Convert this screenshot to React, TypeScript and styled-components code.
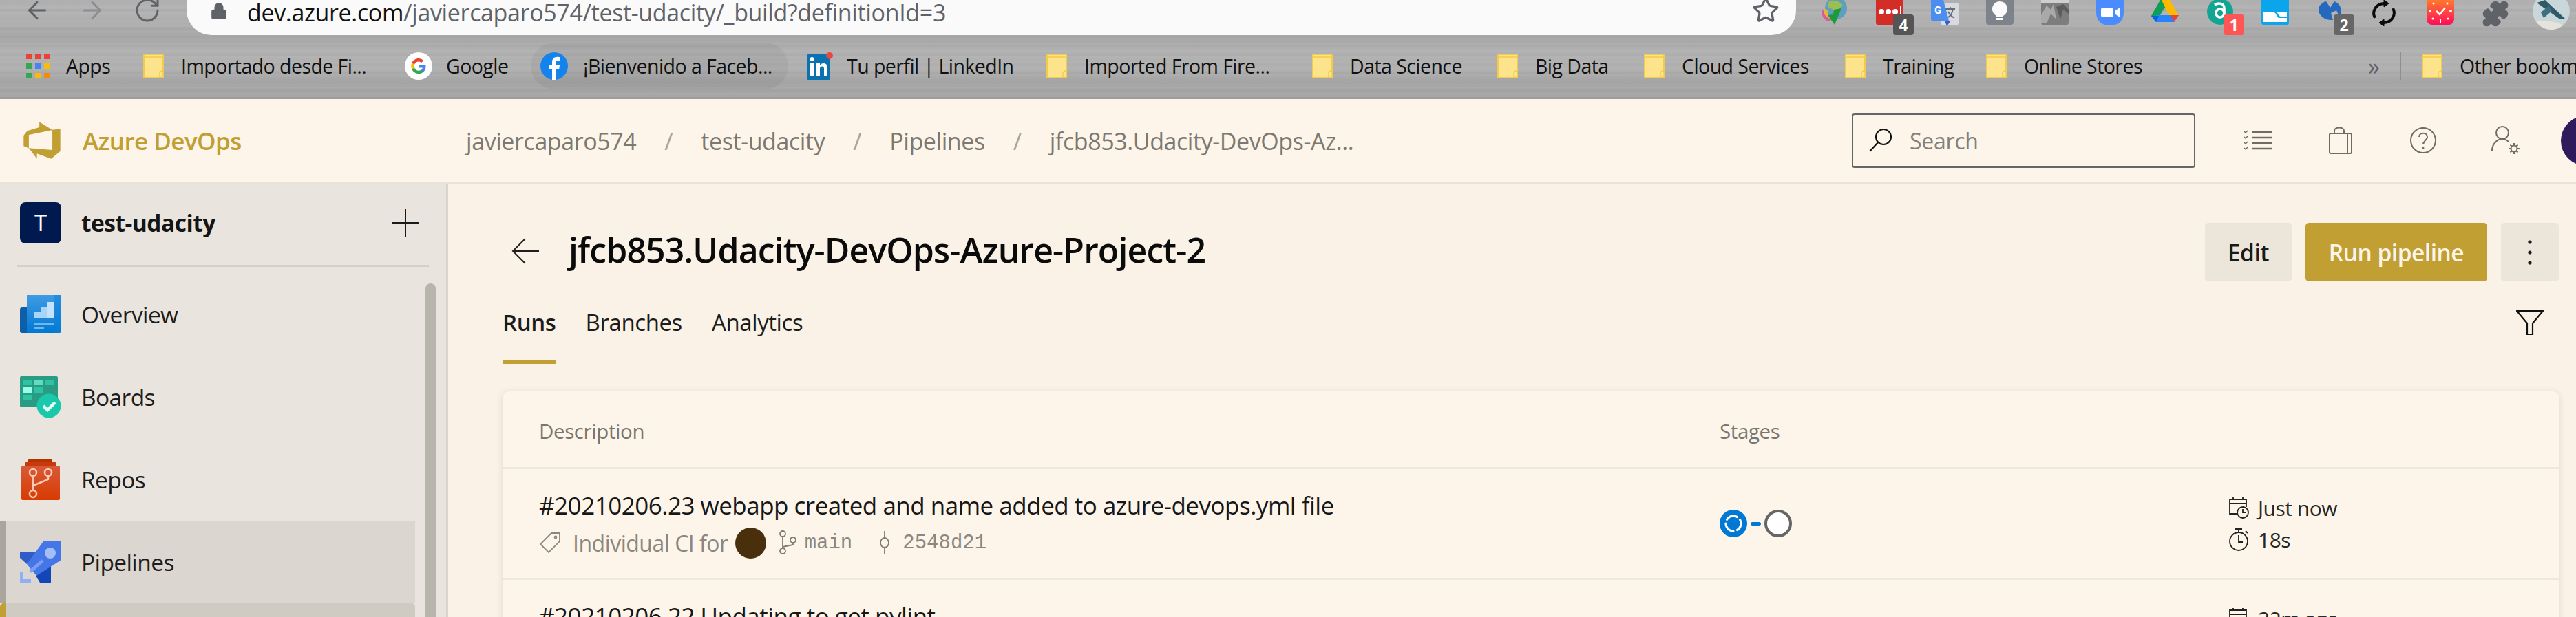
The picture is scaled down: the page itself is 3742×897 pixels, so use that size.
import React from "react";
import styled, { createGlobalStyle } from "styled-components";
import { ArrowLeft, ArrowRight, RotateCw, Lock, Star, Puzzle } from "lucide-react";

const SANS = `"Open Sans", "Noto Sans", "Liberation Sans", sans-serif`;
const MONO = `"Liberation Mono", "DejaVu Sans Mono", monospace`;
const GOLD = "#c19f33";

const GlobalStyle = createGlobalStyle`
  html, body { margin: 0; padding: 0; background: #fdf5e9; }
  body { font-family: ${SANS}; }
  * { box-sizing: border-box; }
`;

const Page = styled.div`
  width: 3742px;
  height: 897px;
  overflow: hidden;
  display: flex;
  flex-direction: column;
`;

/* browser chrome */
const Chrome = styled.div`
  height: 144px;
  flex: none;
  border-bottom: 3px solid #9c9c9c;
  background-color: #adadad;
  background-image:
    linear-gradient(180deg, rgba(255, 255, 255, 0.05) 0 22%, rgba(0, 0, 0, 0.03) 34% 41%, rgba(255, 255, 255, 0.05) 52% 70%, rgba(0, 0, 0, 0.04) 82% 100%),
    repeating-linear-gradient(180deg, rgba(255, 255, 255, 0.035) 0 2px, transparent 4px 9px),
    repeating-linear-gradient(180deg, rgba(0, 0, 0, 0.025) 0 3px, transparent 5px 13px);
`;

const TopBar = styled.div`
  height: 51px;
  display: flex;
  align-items: flex-start;
`;

const NavGroup = styled.div`
  width: 271px;
  flex: none;
  display: flex;
  gap: 40px;
  padding-left: 34px;
  color: #5f6368;
`;

const NavIcon = styled.span<{ $dim?: boolean }>`
  display: block;
  height: 40px;
  margin-top: -5px;
  color: ${(p) => (p.$dim ? "#8a8d91" : "#5f6368")};
`;

const AddressBar = styled.div`
  width: 2338px;
  height: 51px;
  flex: none;
  display: flex;
  align-items: flex-start;
  background: #fafafa;
  border-radius: 0 0 36px 36px;
  padding: 0 24px 0 34px;
`;

const LockIcon = styled.span`
  display: block;
  height: 30px;
  margin-top: 3px;
  color: #5f6368;
`;

const Url = styled.div`
  margin-left: 28px;
  font-size: 34px;
  line-height: 36px;
  letter-spacing: -0.35px;
  color: #5f6368;
  white-space: nowrap;
`;

const UrlHost = styled.span`
  color: #111;
`;

const StarIcon = styled.span`
  display: block;
  margin-left: auto;
  margin-top: -5px;
  color: #5f6368;
`;

const Extensions = styled.div`
  display: flex;
  gap: 40px;
  margin-left: 36px;
`;

const ExtSlot = styled.div`
  position: relative;
  width: 40px;
  height: 36px;
  flex: none;
`;

const ExtBadge = styled.span<{ $bg: string }>`
  position: absolute;
  left: 25px;
  top: 21px;
  width: 30px;
  height: 30px;
  border-radius: 4px;
  background: ${(p) => p.$bg};
  color: #fff;
  font-size: 23px;
  font-weight: 700;
  line-height: 30px;
  text-align: center;
`;

const BookmarkBar = styled.div`
  height: 90px;
  display: flex;
  align-items: center;
  padding-left: 38px;
  overflow: hidden;
`;

const Bookmark = styled.div<{ $w?: number; $gap: number; $pill?: boolean }>`
  width: ${(p) => (p.$w ? `${p.$w}px` : "auto")};
  height: 68px;
  flex: none;
  display: flex;
  align-items: center;
  gap: ${(p) => p.$gap}px;
  font-size: 28.5px;
  letter-spacing: -0.55px;
  color: #111;
  white-space: nowrap;
  ${(p) =>
    p.$pill &&
    `
    background: rgba(0, 0, 0, 0.045);
    border-radius: 34px;
    padding-left: 14px;
    margin-right: 27px;
  `}
`;

const BookmarkOverflow = styled.div`
  margin-left: auto;
  width: 302px;
  flex: none;
  display: flex;
  align-items: center;
  overflow: hidden;
`;

const Chevrons = styled.span`
  width: 46px;
  flex: none;
  color: #5f6368;
  font-size: 34px;
  line-height: 40px;
`;

const BarDivider = styled.span`
  width: 2px;
  height: 40px;
  flex: none;
  margin-right: 30px;
  background: #8f8f8f;
`;

/* azure header */
const Header = styled.header`
  height: 123px;
  flex: none;
  display: flex;
  align-items: center;
  background: #fdf5e9;
  border-bottom: 3px solid #e9e3d9;
`;

const Brand = styled.div`
  width: 677px;
  flex: none;
  display: flex;
  align-items: center;
  gap: 29px;
  padding-left: 31px;
  color: ${GOLD};
  font-size: 35px;
  font-weight: 600;
  letter-spacing: -0.55px;
`;

const Crumbs = styled.nav`
  display: flex;
  align-items: center;
  gap: 40px;
  margin-top: 2px;
  font-size: 34px;
  letter-spacing: -0.42px;
  color: #7d7971;
`;

const CrumbSlash = styled.span`
  width: 14px;
  text-align: center;
  color: #a7a39b;
`;

const HeaderRight = styled.div`
  margin-left: auto;
  display: flex;
  align-items: center;
`;

const SearchBox = styled.div`
  width: 499px;
  height: 79px;
  display: flex;
  align-items: center;
  gap: 24px;
  padding-left: 22px;
  margin-right: 31px;
  border: 2px solid #666;
  border-radius: 4px;
  color: #85817a;
  font-size: 32px;
  letter-spacing: -0.3px;
`;

const HeaderIcon = styled.button`
  width: 120px;
  height: 60px;
  padding: 0;
  border: 0;
  background: none;
  display: flex;
  align-items: center;
  justify-content: center;
  color: #6f6b65;
`;

const Avatar = styled.div`
  width: 73px;
  height: 73px;
  flex: none;
  margin-left: 20px;
  margin-right: -51px;
  border-radius: 50%;
  background: #2f1a5c;
`;

const Body = styled.div`
  flex: 1;
  min-height: 0;
  display: flex;
`;

/* sidebar */
const Sidebar = styled.aside`
  position: relative;
  width: 651px;
  flex: none;
  overflow: hidden;
  background: #e9e5de;
  border-right: 3px solid #d9d5cd;
`;

const ProjectRow = styled.div`
  height: 118px;
  display: flex;
  align-items: center;
  padding: 0 39px 4px 29px;
`;

const ProjectTile = styled.div`
  width: 60px;
  height: 60px;
  flex: none;
  border-radius: 8px;
  background: #001a4f;
  color: #fff;
  font-size: 33px;
  line-height: 60px;
  text-align: center;
`;

const ProjectName = styled.div`
  margin-left: 29px;
  font-size: 33.5px;
  font-weight: 700;
  letter-spacing: -0.5px;
  color: #151515;
`;

const PlusIcon = styled.span`
  display: block;
  margin-left: auto;
  height: 40px;
`;

const SideDivider = styled.div`
  height: 3px;
  margin: 0 25px;
  background: #d4d0c8;
`;

const NavList = styled.div`
  width: 603px;
  padding-top: 9px;
`;

const NavRow = styled.div<{ $active?: boolean }>`
  height: 120px;
  display: flex;
  align-items: center;
  gap: 29px;
  padding-left: 21px;
  border-left: 8px solid ${(p) => (p.$active ? "#aaa69e" : "transparent")};
  background: ${(p) => (p.$active ? "#dbd6cf" : "transparent")};
  color: #1d1d1d;
  font-size: 33.5px;
  letter-spacing: -0.6px;
  font-weight: ${(p) => (p.$active ? 500 : 400)};
`;

const SubRow = styled.div`
  height: 120px;
  border-left: 8px solid ${GOLD};
  border-radius: 5px 5px 0 0;
  background: #cfcbc3;
`;

const SideScroll = styled.div`
  position: absolute;
  left: 618px;
  top: 145px;
  bottom: -40px;
  width: 15px;
  border-radius: 8px;
  background: #b8b5ad;
`;

/* main content */
const Main = styled.main`
  flex: 1;
  min-width: 0;
  background: #faf2e6;
  padding: 57px 24px 0 79px;
`;

const TitleRow = styled.div`
  height: 85px;
  display: flex;
  align-items: center;
  padding-left: 13px;
`;

const BackArrow = styled.span`
  display: block;
  width: 83px;
  height: 38px;
  margin-top: -3px;
  flex: none;
`;

const PageTitle = styled.h1`
  margin: -8px 0 0;
  font-size: 50px;
  font-weight: 600;
  letter-spacing: -0.9px;
  color: #0b0b0b;
`;

const Actions = styled.div`
  margin-left: auto;
  display: flex;
  gap: 20px;
  margin-right: 1px;
`;

const ActionButton = styled.button<{ $primary?: boolean; $w: number }>`
  width: ${(p) => p.$w}px;
  height: 85px;
  padding: 0;
  border: 0;
  border-radius: 5px;
  display: flex;
  align-items: center;
  justify-content: center;
  font-family: ${SANS};
  font-size: 33.5px;
  font-weight: 600;
  letter-spacing: -0.5px;
  background: ${(p) => (p.$primary ? GOLD : "#ece5da")};
  color: ${(p) => (p.$primary ? "#fdf5e9" : "#1a1a1a")};
`;

const TabsRow = styled.div`
  height: 120px;
  display: flex;
  align-items: flex-end;
`;

const Tab = styled.div<{ $active?: boolean }>`
  height: 104px;
  padding-top: 23px;
  margin-right: 43px;
  font-size: 33px;
  line-height: 42px;
  letter-spacing: -0.4px;
  color: #1c1c1c;
  font-weight: ${(p) => (p.$active ? 600 : 400)};
  border-bottom: 5px solid ${(p) => (p.$active ? GOLD : "transparent")};
`;

const FilterIcon = styled.span`
  display: block;
  margin-left: auto;
  margin-right: 23px;
  align-self: flex-start;
  margin-top: 42px;
  height: 36px;
`;

const Card = styled.section`
  margin-top: 40px;
  width: 2988px;
  height: 400px;
  background: #fdf5e9;
  border-radius: 10px 10px 0 0;
  box-shadow: 0 1px 10px rgba(90, 70, 40, 0.14);
`;

const TableRow = styled.div<{ $header?: boolean }>`
  display: grid;
  grid-template-columns: 1715px 739px 1fr;
  height: ${(p) => (p.$header ? "113px" : "161px")};
  padding-left: 53px;
  border-bottom: 3px solid #ece7df;
  align-items: ${(p) => (p.$header ? "start" : "stretch")};
`;

const HeadCell = styled.div`
  padding-top: 39px;
  font-size: 29.5px;
  line-height: 38px;
  letter-spacing: -0.4px;
  color: #7a766f;
`;

const DescCell = styled.div`
  padding-top: 31px;
`;

const RunTitle = styled.div`
  font-size: 35px;
  line-height: 44px;
  font-weight: 500;
  letter-spacing: -0.5px;
  color: #171717;
  white-space: nowrap;
`;

const RunMeta = styled.div`
  display: flex;
  align-items: center;
  height: 46px;
  margin-top: 9px;
  color: #8b8780;
  font-size: 32px;
  letter-spacing: -0.5px;
`;

const MetaIcon = styled.span<{ $l?: number; $r?: number }>`
  display: block;
  height: 36px;
  flex: none;
  margin-left: ${(p) => p.$l || 0}px;
  margin-right: ${(p) => p.$r || 0}px;
`;

const AuthorDot = styled.span`
  width: 45px;
  height: 45px;
  flex: none;
  margin: 0 18px 0 10px;
  border-radius: 50%;
  background: #4a2f0c;
`;

const MonoText = styled.span`
  font-family: ${MONO};
  font-size: 29px;
  letter-spacing: 0;
  color: #8b8780;
`;

const StageCell = styled.div`
  padding-top: 59px;
  display: flex;
  align-items: flex-start;
`;

const StageConnector = styled.span`
  width: 15px;
  height: 5px;
  margin: 18px 5px 0;
  border-radius: 3px;
  background: #0078d4;
`;

const TimeCell = styled.div`
  padding-top: 38px;
  display: flex;
  flex-direction: column;
  gap: 10px;
`;

const TimeLine = styled.div`
  height: 36px;
  display: flex;
  align-items: center;
  gap: 13px;
  font-size: 30px;
  letter-spacing: -0.5px;
  color: #262626;
`;

/* drawings */
const FolderIcon = () => (
  <svg width="30" height="36" viewBox="0 0 30 36">
    <rect x="1" y="1" width="28" height="34" fill="#fde48c" stroke="#f2cb4a" strokeWidth="2" />
    <path d="M1 5h28" stroke="#f2cb4a" strokeWidth="1.5" />
    <path d="M24 34v-7l3-2 2 2v8z" fill="#fde48c" stroke="#f2cb4a" strokeWidth="1.5" />
  </svg>
);

const AppsIcon = () => (
  <svg width="34" height="36" viewBox="0 0 34 36">
    {["#ea4335", "#ea4335", "#ea4335", "#34a853", "#4285f4", "#fbbc05", "#34a853", "#fbbc05", "#f58a07"].map(
      (c, i) => (
        <rect key={i} x={(i % 3) * 13} y={Math.floor(i / 3) * 14} width="8" height="8" fill={c} />
      )
    )}
  </svg>
);

const GoogleIcon = () => (
  <svg width="40" height="40" viewBox="0 0 40 40">
    <circle cx="20" cy="20" r="20" fill="#fff" />
    <path d="M30.5 20.5c0-.8-.1-1.500-.2-2.200H20v4.200h5.900c-.3 1.400-1 2.500-2.200 3.300v2.700h3.500c2-1.900 3.300-4.700 3.300-8z" fill="#4285f4" />
    <path d="M20 31c2.900 0 5.400-1 7.200-2.600l-3.500-2.700c-1 .7-2.200 1-3.700 1-2.800 0-5.200-1.900-6-4.500H10.400v2.800C12.200 28.600 15.800 31 20 31z" fill="#34a853" />
    <path d="M14 22.200c-.5-1.400-.5-3 0-4.400V15H10.400c-1.500 3-1.500 7 0 10z" fill="#fbbc05" />
    <path d="M20 13.400c1.600 0 3 .5 4.100 1.600l3.100-3.100C25.300 10.100 22.900 9 20 9c-4.200 0-7.800 2.400-9.600 6l3.600 2.800c.8-2.500 3.200-4.400 6-4.400z" fill="#ea4335" />
  </svg>
);

const FacebookIcon = () => (
  <svg width="40" height="40" viewBox="0 0 40 40">
    <circle cx="20" cy="20" r="20" fill="#1583ee" />
    <path d="M17 40V25h-5v-6h5v-4.500c0-5 3-7.700 7.500-7.700 2.100 0 3.700.3 3.700.3v5h-2.500c-2.500 0-3.200 1.500-3.200 3.100V19h5.500l-.9 6h-4.600v15z" fill="#fff" />
  </svg>
);

const LinkedInIcon = () => (
  <svg width="38" height="40" viewBox="0 0 38 40">
    <rect x="0" y="3" width="34" height="37" rx="2" fill="#0a72b1" />
    <rect x="5" y="16" width="5" height="19" fill="#fff" />
    <circle cx="7.500" cy="10" r="3" fill="#fff" />
    <path d="M14 16h5v3c1-2 3-3 5-3 4 0 6 2.500 6 7v12h-5V24c0-2.500-1-3.500-3-3.500s-3 1.500-3 3.500v11h-5z" fill="#fff" />
    <circle cx="33" cy="5" r="5" fill="#e8483f" />
  </svg>
);

const IdmIcon = () => (
  <svg width="40" height="36" viewBox="0 0 40 36">
    <circle cx="22" cy="12" r="16" fill="#5c9fc0" />
    <path d="M12 2c8-3 16 0 20 6l-10 8-12-6z" fill="#9bbf52" />
    <path d="M3 14c-4 8 2 16 10 17l3-5c-5 0-8-4-7-9z" fill="#d65aa0" />
    <path d="M5 12c-2 6 1 13 8 15l2-3c-4-1-6-5-5-9z" fill="#e8b23c" />
    <path d="M30 12 20 36 10 22l8-1 1-7z" fill="#1e9a3a" />
  </svg>
);

const LastPassIcon = () => (
  <svg width="40" height="36" viewBox="0 0 40 36">
    <path d="M0 0h40v33a3 3 0 0 1-3 3H3a3 3 0 0 1-3-3z" fill="#d32d27" />
    <circle cx="8" cy="17" r="4" fill="#fff" />
    <circle cx="18" cy="17" r="4" fill="#fff" />
    <circle cx="28" cy="17" r="4" fill="#fff" />
    <rect x="35" y="9" width="2" height="15" fill="#fff" />
  </svg>
);

const TranslateIcon = () => (
  <svg width="40" height="40" viewBox="0 0 40 40" style={{ overflow: "visible" }}>
    <rect x="14" y="4" width="26" height="32" rx="2" fill="#d8dadd" />
    <path d="M21 13h14M28 10v3M23 26c5-2 8-7 9-13M25 17c2 4 5 7 9 9" stroke="#5f6f80" strokeWidth="1.800" fill="none" />
    <path d="M0 0h18l8 30H2a2 2 0 0 1-2-2z" fill="#4c8df0" />
    <path d="M20 30h9l-6 8z" fill="#3a5fc4" />
    <text x="5" y="20" fill="#fff" fontSize="15" fontWeight="700" fontFamily="Roboto, sans-serif">G</text>
  </svg>
);

const BulbIcon = () => (
  <svg width="40" height="36" viewBox="0 0 40 36">
    <path d="M0 0h40v32a4 4 0 0 1-4 4H4a4 4 0 0 1-4-4z" fill="#7d838a" />
    <circle cx="20" cy="13" r="11" fill="#fbfbfb" />
    <rect x="15" y="22" width="10" height="3" fill="#fbfbfb" />
    <rect x="15" y="26" width="10" height="3" fill="#fbfbfb" />
  </svg>
);

const PhotoIcon = () => (
  <svg width="40" height="36" viewBox="0 0 40 36">
    <rect width="40" height="36" rx="3" fill="#7d7d7d" />
    <rect width="40" height="4" fill="#cfcfcf" />
    <path d="M0 22 8 8l6 6 4-8 4 22-8-8-6 14H0z" fill="#a9a9a9" />
    <path d="M22 10 32 6l8 8v6l-8-6-4 14z" fill="#5c5c5c" />
  </svg>
);

const ZoomIcon = () => (
  <svg width="40" height="36" viewBox="0 0 40 36">
    <path d="M0 0h40v18c0 11-7 18-15 18H15C7 36 0 29 0 18z" fill="#4a8cff" />
    <rect x="7" y="11" width="18" height="14" rx="3" fill="#fff" />
    <path d="m27 16 7-5v14l-7-5z" fill="#fff" />
  </svg>
);

const DriveIcon = () => (
  <svg width="40" height="36" viewBox="0 0 40 36">
    <path d="M13 0h14l-6 12-8 0z" fill="#0f9d58" />
    <path d="M13 0 0 23l7 9 13-22z" fill="#0f9d58" />
    <path d="M27 0 40 23H26L15 0z" fill="#ffba00" />
    <path d="M7 22h33l-7 10H7z" fill="#2684fc" />
    <path d="M0 23h11l-4 9z" fill="#0066da" />
    <path d="M28 22h12l-7 10z" fill="#ea4335" />
  </svg>
);

const AmazonAIcon = () => (
  <svg width="40" height="36" viewBox="0 0 40 36">
    <circle cx="20" cy="17" r="19" fill="#13a594" />
    <circle cx="20" cy="19" r="6" fill="none" stroke="#fff" strokeWidth="3.500" />
    <path d="M12 7c6-4 14-2 14 5v13" fill="none" stroke="#fff" strokeWidth="3.500" />
  </svg>
);

const BlueFolderIcon = () => (
  <svg width="40" height="36" viewBox="0 0 40 36">
    <path d="M0 0h40v33a3 3 0 0 1-3 3H3a3 3 0 0 1-3-3z" fill="#0ba5ec" />
    <path d="M3 18h15c4 0 4 8 8 8h11v6H3z" fill="#fff" />
    <path d="M22 18h15v6H28c-3 0-4-6-6-6z" fill="#fff" />
  </svg>
);

const MalwareIcon = () => (
  <svg width="40" height="36" viewBox="0 0 40 36">
    <path d="M3 14C3 8 9 3 14 2l6 9 6-9c6 2 10 8 10 14 0 3-1 6-3 8l-4-9-8 4 3 10C14 30 3 24 3 14z" fill="#2469bd" />
  </svg>
);

const SyncIcon = () => (
  <svg width="36" height="38" viewBox="0 0 36 38" fill="none" stroke="#0a0a0a" strokeWidth="4">
    <path d="M5 26C0 17 6 5 19 5" />
    <path d="M31 12c5 9-1 21-14 21" />
    <path d="m18 0 7 5-7 5z" fill="#0a0a0a" strokeWidth="1" />
    <path d="m18 38-7-5 7-5z" fill="#0a0a0a" strokeWidth="1" />
  </svg>
);

const ClockAppIcon = () => (
  <svg width="40" height="36" viewBox="0 0 40 36">
    <defs>
      <linearGradient id="clockApp" x1="0" y1="0" x2="0" y2="1">
        <stop offset="0" stopColor="#ff7a2b" />
        <stop offset="1" stopColor="#ff0e5a" />
      </linearGradient>
    </defs>
    <path d="M0 0h40v28a8 8 0 0 1-8 8H8a8 8 0 0 1-8-8z" fill="url(#clockApp)" />
    <path d="m14 16 5 5 8-10" fill="none" stroke="#fff" strokeWidth="2.500" />
    <circle cx="5" cy="16" r="2" fill="#fff" />
    <circle cx="35" cy="16" r="2" fill="#fff" />
    <rect x="19" y="28" width="2" height="5" fill="#fff" />
    <circle cx="9" cy="27" r="1.500" fill="#fff" />
    <circle cx="31" cy="27" r="1.500" fill="#fff" />
    <circle cx="10" cy="5" r="1.500" fill="#fff" />
    <circle cx="30" cy="5" r="1.500" fill="#fff" />
  </svg>
);

const PilotIcon = () => (
  <svg width="42" height="43" viewBox="0 0 42 43" style={{ overflow: "visible" }}>
    <clipPath id="pilotClip">
      <circle cx="21" cy="16" r="27" />
    </clipPath>
    <g clipPath="url(#pilotClip)">
      <rect x="-8" y="-12" width="58" height="58" fill="#c9d6da" />
      <path d="M0 4 34 28l8 0L12 0z" fill="#2d5a66" />
      <path d="M6 18 18 8l4 8-12 10z" fill="#3b7080" />
      <path d="M-8 34c12-6 34-4 50 4v10H-8z" fill="#e6e3dc" />
    </g>
  </svg>
);

const SearchGlass = () => (
  <svg width="36" height="36" viewBox="0 0 36 36" fill="none" stroke="#111" strokeWidth="2.200">
    <circle cx="22" cy="13" r="11" />
    <path d="M14 21 2 34" />
  </svg>
);

const WorkItemsIcon = () => (
  <svg width="42" height="30" viewBox="0 0 42 30" fill="none" stroke="currentColor" strokeWidth="2.500">
    <path d="M13 3h28M13 11h28M13 19h28M13 27h28" />
    <path d="m1 2 2 2 3-3M1 10l2 2 3-3M1 18l2 2 3-3M1 26l2 2 3-3" strokeWidth="1.500" />
  </svg>
);

const BagIcon = () => (
  <svg width="34" height="40" viewBox="0 0 34 40" fill="none" stroke="currentColor" strokeWidth="2">
    <rect x="1" y="10" width="32" height="29" rx="2" />
    <path d="M27 10v29" />
    <path d="M8 10V6c0-6 14-6 14 0v4" />
  </svg>
);

const HelpIcon = () => (
  <svg width="38" height="38" viewBox="0 0 38 38" fill="none" stroke="currentColor" strokeWidth="2">
    <circle cx="19" cy="19" r="18" />
    <path d="M13 14c0-7 12-7 12 0 0 5-6 5-6 11" />
    <circle cx="19" cy="30" r="1.500" fill="currentColor" stroke="none" />
  </svg>
);

const UserGearIcon = () => (
  <svg width="42" height="42" viewBox="0 0 42 42" fill="none" stroke="currentColor" strokeWidth="2">
    <circle cx="16" cy="10" r="9" />
    <path d="M1 36c0-8 6-17 15-17 4 0 7 2 9 4" />
    <circle cx="33" cy="33" r="4.500" />
    <path d="M33 25v3M33 38v3M25 33h3M38 33h3M27.500 27.500l2 2M36.500 36.500l2 2M27.500 38.500l2-2M36.500 29.500l2-2" />
  </svg>
);

const OverviewIcon = () => (
  <svg width="60" height="60" viewBox="0 0 60 60">
    <defs>
      <linearGradient id="ovMain" x1="0" y1="0" x2="0" y2="1">
        <stop offset="0" stopColor="#3f9be4" />
        <stop offset="1" stopColor="#0078d4" />
      </linearGradient>
    </defs>
    <g transform="translate(0 2)">
      <path d="M3 18h12v37H3a3 3 0 0 1-3-3V21a3 3 0 0 1 3-3z" fill="#0f5ea8" />
      <path d="M10 0h50v52a3 3 0 0 1-3 3H10z" fill="url(#ovMain)" />
      <path d="M50 55h7a3 3 0 0 0 3-3V0h-10z" fill="#0c7fd8" opacity="0.5" />
      <rect x="20" y="25" width="30" height="9" fill="#a8d4f8" />
      <rect x="30" y="17" width="10" height="8" fill="#a8d4f8" />
      <rect x="40" y="10" width="10" height="24" fill="#c4e2fb" />
      <rect x="20" y="40" width="30" height="3" fill="#71b7ef" />
      <rect x="20" y="47" width="15" height="3" fill="#71b7ef" />
    </g>
  </svg>
);

const BoardsIcon = () => (
  <svg width="60" height="60" viewBox="0 0 60 60">
    <rect x="0" y="0" width="55" height="45" rx="2" fill="#2b9c84" />
    <rect x="5" y="5" width="13" height="8" fill="#2fc2a3" />
    <rect x="21" y="5" width="13" height="8" fill="#5fdcc2" />
    <rect x="37" y="5" width="13" height="8" fill="#2fc2a3" />
    <rect x="5" y="16" width="13" height="8" fill="#98fde7" />
    <rect x="21" y="16" width="13" height="8" fill="#2fc2a3" />
    <rect x="5" y="27" width="13" height="8" fill="#2fc2a3" />
    <circle cx="42" cy="43" r="17.500" fill="#1ac9ac" />
    <path d="m34 43 6 6 11-11" fill="none" stroke="#e8fff9" strokeWidth="4.500" />
  </svg>
);

const ReposIcon = () => (
  <svg width="60" height="60" viewBox="-2 0 60 60">
    <defs>
      <linearGradient id="repoMain" x1="0" y1="0" x2="0" y2="1">
        <stop offset="0" stopColor="#d85a3a" />
        <stop offset="1" stopColor="#d83b01" />
      </linearGradient>
    </defs>
    <rect x="10" y="0" width="35" height="7" rx="2" fill="#b83200" />
    <rect x="5" y="5" width="46" height="7" rx="2" fill="#c63a0c" />
    <rect x="0" y="10" width="56" height="50" rx="2" fill="url(#repoMain)" />
    <g fill="none" stroke="#ffc9b5" strokeWidth="2.500">
      <circle cx="17" cy="20" r="5" />
      <circle cx="39" cy="20" r="5" />
      <circle cx="17" cy="51" r="5" />
      <path d="M17 25v21M39 25v5L17 39" />
    </g>
  </svg>
);

const PipelinesIcon = () => (
  <svg width="60" height="60" viewBox="0 0 60 60">
    <path d="M0 16h24L10 33 0 24z" fill="#2f5cc6" />
    <path d="M45 25v35H29l-6-10z" fill="#1347b8" />
    <path d="M34 0h26v27L24 50 10 33z" fill="#4476e8" />
    <circle cx="44" cy="17" r="8" fill="#a5bdf5" />
    <path d="M33 28 15 44" stroke="#7d9df0" strokeWidth="5" />
    <path d="M0 45h5v10h11v5H0z" fill="#8fb0f5" />
  </svg>
);

const TagIcon = () => (
  <svg width="32" height="32" viewBox="0 0 32 32" fill="none" stroke="#8b8780" strokeWidth="1.800">
    <path d="M30 2H18L2 18l12 12 16-16z" />
    <circle cx="24" cy="8" r="1.500" />
  </svg>
);

const BranchIcon = () => (
  <svg width="26" height="36" viewBox="0 0 26 36" fill="none" stroke="#7f7b74" strokeWidth="1.800">
    <circle cx="6" cy="5" r="4" />
    <circle cx="21" cy="14" r="4" />
    <circle cx="6" cy="30" r="4" />
    <path d="M6 9v17M21 18v3l-15 3" />
  </svg>
);

const CommitIcon = () => (
  <svg width="16" height="36" viewBox="0 0 16 36" fill="none" stroke="#7f7b74" strokeWidth="1.800">
    <ellipse cx="8" cy="18" rx="6" ry="7" />
    <path d="M8 1v10M8 25v10" />
  </svg>
);

const StageRunning = () => (
  <svg width="40" height="40" viewBox="0 0 40 40">
    <circle cx="20" cy="20" r="20" fill="#0078d4" />
    <circle cx="20" cy="20" r="11" fill="none" stroke="#fff" strokeWidth="3.200" strokeDasharray="17 6" strokeLinecap="round" transform="rotate(-30 20 20)" />
  </svg>
);

const StagePending = () => (
  <svg width="40" height="40" viewBox="0 0 40 40">
    <circle cx="20" cy="20" r="18" fill="#fff" stroke="#666" strokeWidth="4" />
  </svg>
);

const CalendarIcon = () => (
  <svg width="30" height="34" viewBox="0 0 30 34" fill="none" stroke="#222" strokeWidth="1.800">
    <path d="M14 26H2V5h24v11M2 11h24M7 2v4M21 2v4" />
    <circle cx="21" cy="24" r="8" fill="#fdf5e9" />
    <path d="M21 19v5h4" />
  </svg>
);

const TimerIcon = () => (
  <svg width="30" height="34" viewBox="0 0 30 34" fill="none" stroke="#222" strokeWidth="1.800">
    <circle cx="15" cy="20" r="13" />
    <path d="M15 11v10h6M10 2h10M15 2v5M25 5l3 3" />
  </svg>
);

const folders = [
  { label: "Imported From Fire...", w: 386 },
  { label: "Data Science", w: 269 },
  { label: "Big Data", w: 213 },
  { label: "Cloud Services", w: 292 },
  { label: "Training", w: 205 },
  { label: "Online Stores", w: 400 },
];

export default function App() {
  return (
    <Page>
      <GlobalStyle />
      <Chrome>
        <TopBar>
          <NavGroup>
            <NavIcon><ArrowLeft size={40} strokeWidth={1.8} /></NavIcon>
            <NavIcon $dim><ArrowRight size={40} strokeWidth={1.8} /></NavIcon>
            <NavIcon><RotateCw size={40} strokeWidth={1.8} /></NavIcon>
          </NavGroup>
          <AddressBar>
            <LockIcon><Lock size={26} fill="currentColor" /></LockIcon>
            <Url>
              <UrlHost>dev.azure.com</UrlHost>/javiercaparo574/test-udacity/_build?definitionId=3
            </Url>
            <StarIcon><Star size={40} strokeWidth={2} /></StarIcon>
          </AddressBar>
          <Extensions>
            <ExtSlot><IdmIcon /></ExtSlot>
            <ExtSlot><LastPassIcon /><ExtBadge $bg="#555">4</ExtBadge></ExtSlot>
            <ExtSlot><TranslateIcon /></ExtSlot>
            <ExtSlot><BulbIcon /></ExtSlot>
            <ExtSlot><PhotoIcon /></ExtSlot>
            <ExtSlot><ZoomIcon /></ExtSlot>
            <ExtSlot><DriveIcon /></ExtSlot>
            <ExtSlot><AmazonAIcon /><ExtBadge $bg="#ff5555">1</ExtBadge></ExtSlot>
            <ExtSlot><BlueFolderIcon /></ExtSlot>
            <ExtSlot><MalwareIcon /><ExtBadge $bg="#666">2</ExtBadge></ExtSlot>
            <ExtSlot><SyncIcon /></ExtSlot>
            <ExtSlot><ClockAppIcon /></ExtSlot>
            <ExtSlot><Puzzle size={40} color="#5f6368" fill="#5f6368" /></ExtSlot>
            <ExtSlot><PilotIcon /></ExtSlot>
          </Extensions>
        </TopBar>
        <BookmarkBar>
          <Bookmark $w={170} $gap={24}><AppsIcon />Apps</Bookmark>
          <Bookmark $w={380} $gap={25}><FolderIcon />Importado desde Fi...</Bookmark>
          <Bookmark $w={183} $gap={20}><GoogleIcon />Google</Bookmark>
          <Bookmark $w={374} $gap={22} $pill><FacebookIcon />¡Bienvenido a Faceb...</Bookmark>
          <Bookmark $w={348} $gap={20}><LinkedInIcon />Tu perfil | LinkedIn</Bookmark>
          {folders.map((b) => (
            <Bookmark key={b.label} $w={b.w} $gap={25}><FolderIcon />{b.label}</Bookmark>
          ))}
          <BookmarkOverflow>
            <Chevrons>»</Chevrons>
            <BarDivider />
            <Bookmark $gap={25}><FolderIcon />Other bookmarks</Bookmark>
          </BookmarkOverflow>
        </BookmarkBar>
      </Chrome>

      <Header>
        <Brand>
          <svg width="60" height="60" viewBox="0 0 18 18">
            <path
              fill={GOLD}
              d="M17 4v9.740l-4 3.280-6.200-2.260V17L3.290 12.410l10.230.8V4.440zm-3.410.49L7.850 1v2.290L2.580 4.840 1 6.870v4.610l2.260 1V6.570z"
            />
          </svg>
          Azure DevOps
        </Brand>
        <Crumbs>
          <span>javiercaparo574</span>
          <CrumbSlash>/</CrumbSlash>
          <span>test-udacity</span>
          <CrumbSlash>/</CrumbSlash>
          <span>Pipelines</span>
          <CrumbSlash>/</CrumbSlash>
          <span>jfcb853.Udacity-DevOps-Az...</span>
        </Crumbs>
        <HeaderRight>
          <SearchBox><SearchGlass />Search</SearchBox>
          <HeaderIcon><WorkItemsIcon /></HeaderIcon>
          <HeaderIcon><BagIcon /></HeaderIcon>
          <HeaderIcon><HelpIcon /></HeaderIcon>
          <HeaderIcon><UserGearIcon /></HeaderIcon>
          <Avatar />
        </HeaderRight>
      </Header>

      <Body>
        <Sidebar>
          <ProjectRow>
            <ProjectTile>T</ProjectTile>
            <ProjectName>test-udacity</ProjectName>
            <PlusIcon>
              <svg width="40" height="40" viewBox="0 0 40 40" stroke="#1a1a1a" strokeWidth="2">
                <path d="M20 0v40M0 20h40" />
              </svg>
            </PlusIcon>
          </ProjectRow>
          <SideDivider />
          <NavList>
            <NavRow><OverviewIcon />Overview</NavRow>
            <NavRow><BoardsIcon />Boards</NavRow>
            <NavRow><ReposIcon />Repos</NavRow>
            <NavRow $active><PipelinesIcon />Pipelines</NavRow>
            <SubRow />
          </NavList>
          <SideScroll />
        </Sidebar>

        <Main>
          <TitleRow>
            <BackArrow>
              <svg width="40" height="38" viewBox="0 0 40 38" fill="none" stroke="#1f1f1f" strokeWidth="2">
                <path d="M40 19H2M20 1 2 19l18 18" />
              </svg>
            </BackArrow>
            <PageTitle>jfcb853.Udacity-DevOps-Azure-Project-2</PageTitle>
            <Actions>
              <ActionButton $w={126}>Edit</ActionButton>
              <ActionButton $w={264} $primary>Run pipeline</ActionButton>
              <ActionButton $w={84}>
                <svg width="10" height="40" viewBox="0 0 10 40" fill="#1a1a1a">
                  <circle cx="5" cy="5" r="2.600" />
                  <circle cx="5" cy="20" r="2.600" />
                  <circle cx="5" cy="35" r="2.600" />
                </svg>
              </ActionButton>
            </Actions>
          </TitleRow>

          <TabsRow>
            <Tab $active>Runs</Tab>
            <Tab>Branches</Tab>
            <Tab>Analytics</Tab>
            <FilterIcon>
              <svg width="40" height="36" viewBox="0 0 40 36" fill="none" stroke="#111" strokeWidth="2.200">
                <path d="M1 1h38L24 19v16h-8V19z" />
              </svg>
            </FilterIcon>
          </TabsRow>

          <Card>
            <TableRow $header>
              <HeadCell>Description</HeadCell>
              <HeadCell>Stages</HeadCell>
              <span />
            </TableRow>
            <TableRow>
              <DescCell>
                <RunTitle>#20210206.23 webapp created and name added to azure-devops.yml file</RunTitle>
                <RunMeta>
                  <MetaIcon $r={17}><TagIcon /></MetaIcon>
                  Individual CI for
                  <AuthorDot />
                  <MetaIcon $r={12}><BranchIcon /></MetaIcon>
                  <MonoText>main</MonoText>
                  <MetaIcon $l={39} $r={18}><CommitIcon /></MetaIcon>
                  <MonoText>2548d21</MonoText>
                </RunMeta>
              </DescCell>
              <StageCell>
                <StageRunning />
                <StageConnector />
                <StagePending />
              </StageCell>
              <TimeCell>
                <TimeLine><CalendarIcon />Just now</TimeLine>
                <TimeLine><TimerIcon />18s</TimeLine>
              </TimeCell>
            </TableRow>
            <TableRow>
              <DescCell>
                <RunTitle>#20210206.22 Updating to get pylint</RunTitle>
              </DescCell>
              <span />
              <TimeCell>
                <TimeLine><CalendarIcon />32m ago</TimeLine>
              </TimeCell>
            </TableRow>
          </Card>
        </Main>
      </Body>
    </Page>
  );
}
